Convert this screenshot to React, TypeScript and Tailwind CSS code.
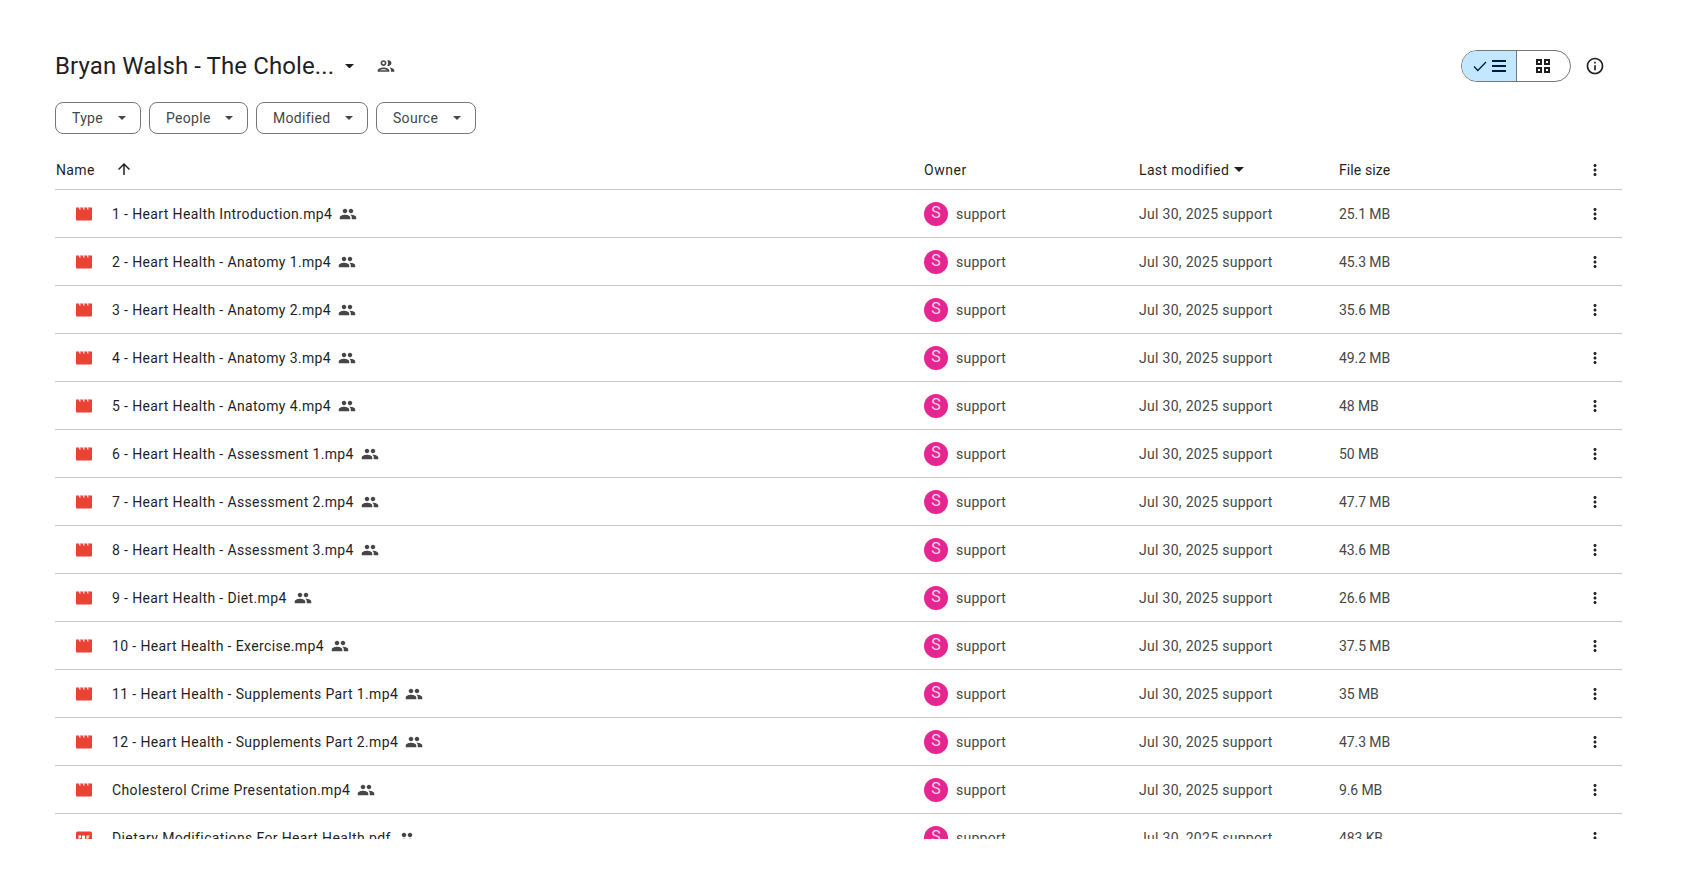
import React from "react";

const PEOPLE = "M16 11c1.66 0 2.99-1.34 2.99-3S17.66 5 16 5c-1.66 0-3 1.34-3 3s1.34 3 3 3zm-8 0c1.66 0 2.99-1.34 2.99-3S9.66 5 8 5C6.34 5 5 6.34 5 8s1.34 3 3 3zm0 2c-2.33 0-7 1.17-7 3.5V19h14v-2.5c0-2.33-4.67-3.5-7-3.5zm8 0c-.29 0-.62.02-.97.05 1.16.84 1.97 1.97 1.97 3.45V19h6v-2.5c0-2.33-4.67-3.5-7-3.5z";
const PEOPLE_OUTLINE = "M9 13.75c-2.34 0-7 1.17-7 3.5V19h14v-1.75c0-2.33-4.66-3.5-7-3.5zM4.34 17c.84-.58 2.87-1.25 4.66-1.25s3.82.67 4.66 1.25H4.34zM9 12c1.93 0 3.5-1.57 3.5-3.5S10.93 5 9 5 5.5 6.57 5.5 8.5 7.07 12 9 12zm0-5c.83 0 1.5.67 1.5 1.5S9.83 10 9 10s-1.5-.67-1.5-1.5S8.17 7 9 7zm7.04 6.81c1.16.84 1.96 1.96 1.96 3.44V19h4v-1.75c0-2.02-3.5-3.17-5.96-3.44zM15 12c1.93 0 3.5-1.57 3.5-3.5S16.93 5 15 5c-.54 0-1.04.13-1.5.35.63.89 1 1.98 1 3.15s-.37 2.26-1 3.15c.46.22.96.35 1.5.35z";

const rows: [string, string, string?][] = [
  ["1 - Heart Health Introduction.mp4", "25.1 MB"],
  ["2 - Heart Health - Anatomy 1.mp4", "45.3 MB"],
  ["3 - Heart Health - Anatomy 2.mp4", "35.6 MB"],
  ["4 - Heart Health - Anatomy 3.mp4", "49.2 MB"],
  ["5 - Heart Health - Anatomy 4.mp4", "48 MB"],
  ["6 - Heart Health - Assessment 1.mp4", "50 MB"],
  ["7 - Heart Health - Assessment 2.mp4", "47.7 MB"],
  ["8 - Heart Health - Assessment 3.mp4", "43.6 MB"],
  ["9 - Heart Health - Diet.mp4", "26.6 MB"],
  ["10 - Heart Health - Exercise.mp4", "37.5 MB"],
  ["11 - Heart Health - Supplements Part 1.mp4", "35 MB"],
  ["12 - Heart Health - Supplements Part 2.mp4", "47.3 MB"],
  ["Cholesterol Crime Presentation.mp4", "9.6 MB"],
  ["Dietary Modifications For Heart Health.pdf", "483 KB", "pdf"],
];

function Caret({ w = 8, className = "" }: { w?: number; className?: string }) {
  return (
    <svg width={w} height={w / 2} viewBox="0 0 10 5" className={className} fill="currentColor">
      <path d="M0 0h10L5 5z" />
    </svg>
  );
}

function Dots() {
  return (
    <svg width="18" height="18" viewBox="0 0 24 24" fill="#1f1f1f" className="ml-[2px]">
      <path d="M12 8c1.1 0 2-.9 2-2s-.9-2-2-2-2 .9-2 2 .9 2 2 2zm0 2c-1.1 0-2 .9-2 2s.9 2 2 2 2-.9 2-2-.9-2-2-2zm0 6c-1.1 0-2 .9-2 2s.9 2 2 2 2-.9 2-2-.9-2-2-2z" />
    </svg>
  );
}

function VideoIcon() {
  return (
    <svg width="16" height="16" viewBox="0 0 16 16" className="shrink-0">
      <path fill="#ea4335" d="M0 1.500h16V13.500a1 1 0 0 1-1 1H1a1 1 0 0 1-1-1z" />
      <path stroke="#fff" strokeWidth="1.100" fill="none" d="M3.400 1.300l.7 2.300M7.400 1.300l.7 2.300M11.400 1.300l.7 2.300" />
    </svg>
  );
}

function PdfIcon() {
  return (
    <svg width="16" height="16" viewBox="0 0 16 16" className="shrink-0">
      <rect x="0" y="1.500" width="16" height="13" rx="1.500" fill="#ea4335" />
      <path fill="#fff" d="M2.500 5.500h2.500v2.500H3.500v1.500h-1zM6 5.500h2.200l.8.800v2.400l-.8.800H6zM10.500 5.500h3v1h-2v.800h1.600v1h-1.600v1.200h-1z" />
    </svg>
  );
}

function Chip({ label, w }: { label: string; w: string }) {
  return (
    <button className={`flex h-8 items-center justify-between rounded-lg border border-[#747775] pl-4 pr-[14px] text-sm tracking-[0.3px] text-[#444746] ${w}`}>
      <span>{label}</span>
      <Caret />
    </button>
  );
}

export default function App() {
  return (
    <div className="h-[888px] overflow-hidden bg-white pl-[55px] pr-[74px] pt-[50px] text-[#1f1f1f] [font-family:Roboto,'Liberation_Sans',sans-serif]">
      <div className="flex h-8 items-center justify-between">
        <div className="flex items-center">
          <span className="text-[24px] leading-8 tracking-[0.1px] text-[#1f1f1f]">Bryan Walsh - The Chole...</span>
          <Caret w={9} className="ml-[11px] text-[#1f1f1f]" />
          <svg width="20" height="20" viewBox="0 0 24 24" fill="#444746" className="ml-[22px]">
            <path d={PEOPLE_OUTLINE} />
          </svg>
        </div>
        <div className="mr-[17px] flex items-center">
          <div className="flex h-8 w-[110px] overflow-hidden rounded-full border border-[#747775]">
            <div className="flex w-[55px] items-center justify-center gap-[5px] border-r border-[#747775] bg-[#c2e7ff] text-[#001d35]">
              <svg width="14" height="11" viewBox="0 0 14 11" fill="none" stroke="currentColor" strokeWidth="1.300"><path d="M1 5.500 4.800 9.500 13 1" /></svg>
              <svg width="14" height="12" viewBox="0 0 14 12" fill="currentColor"><path d="M0 0h14v2H0zM0 5h14v2H0zM0 10h14v2H0z" /></svg>
            </div>
            <div className="flex flex-1 items-center justify-center pr-px">
              <svg width="14" height="14" viewBox="0 0 14 14" fill="none" stroke="#1f1f1f" strokeWidth="2">
                <rect x="1" y="1" width="4" height="4" />
                <rect x="9" y="1" width="4" height="4" />
                <rect x="1" y="9" width="4" height="4" />
                <rect x="9" y="9" width="4" height="4" />
              </svg>
            </div>
          </div>
          <svg width="20" height="20" viewBox="0 0 24 24" fill="#1f1f1f" className="ml-[14px]">
            <path d="M11 7h2v2h-2zm0 4h2v6h-2zm1-9C6.480 2 2 6.480 2 12s4.480 10 10 10 10-4.480 10-10S17.520 2 12 2zm0 18c-4.410 0-8-3.590-8-8s3.590-8 8-8 8 3.590 8 8-3.590 8-8 8z" />
          </svg>
        </div>
      </div>

      <div className="mt-[20px] flex gap-2">
        <Chip label="Type" w="w-[86px]" />
        <Chip label="People" w="w-[99px]" />
        <Chip label="Modified" w="w-[112px]" />
        <Chip label="Source" w="w-[100px]" />
      </div>

      <div className="mt-[16px] flex h-[40px] items-center border-b border-[#c7c7c7] text-sm text-[#1f1f1f]">
        <div className="flex w-[869px] items-center pl-px tracking-[0.35px]">
          <span>Name</span>
          <svg width="18" height="18" viewBox="0 0 24 24" fill="#1f1f1f" className="ml-[20px] -mt-[2px]">
            <path d="m4 12 1.410 1.410L11 7.830V20h2V7.830l5.580 5.590L20 12l-8-8z" />
          </svg>
        </div>
        <div className="w-[215px] tracking-[0.55px]">Owner</div>
        <div className="flex w-[200px] items-center gap-[5px] tracking-[0.35px]">
          Last modified
          <Caret w={10} />
        </div>
        <div className="w-[245px] tracking-[0.1px]">File size</div>
        <Dots />
      </div>

      <div className="h-[649px] overflow-hidden">
        {rows.map(([name, size, kind]) => (
          <div key={name} className="flex h-[48px] items-center border-b border-[#c7c7c7] text-sm text-[#444746]">
            <div className="flex w-[869px] items-center pl-[21px]">
              {kind === "pdf" ? <PdfIcon /> : <VideoIcon />}
              <span className="ml-[20px] tracking-[0.37px] text-[#1f1f1f]">{name}</span>
              <svg width="18" height="18" viewBox="0 0 24 24" fill="#444746" className="ml-[7px]">
                <path d={PEOPLE} />
              </svg>
            </div>
            <div className="flex w-[215px] items-center gap-2 tracking-[0.25px]">
              <div className="flex h-6 w-6 items-center justify-center rounded-full bg-[#e52592] text-[16px] tracking-normal text-[#fbd0e6]">S</div>
              support
            </div>
            <div className="w-[200px] tracking-[0.3px]">Jul 30, 2025 support</div>
            <div className="w-[245px] tracking-[-0.1px]">{size}</div>
            <Dots />
          </div>
        ))}
      </div>
    </div>
  );
}
